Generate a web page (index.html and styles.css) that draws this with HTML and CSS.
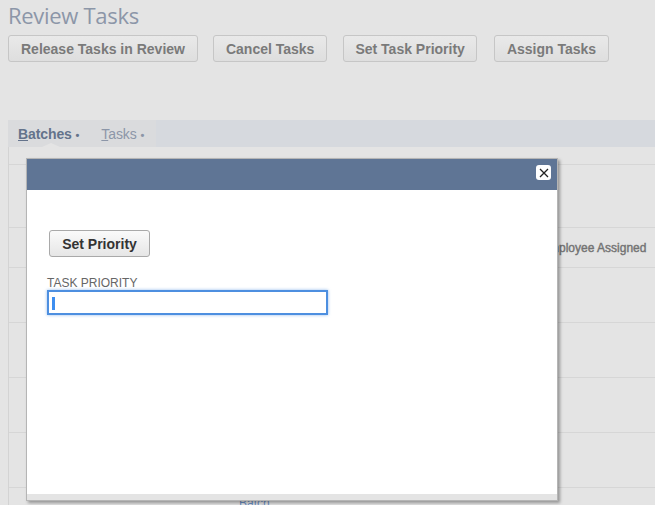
FILE: index.html
```html
<!DOCTYPE html>
<html>
<head>
<meta charset="utf-8">
<link rel="stylesheet" href="styles.css">
</head>
<body>
<div class="page">
  <h1 class="title">Review Tasks</h1>
  <div class="actions">
    <button class="btn">Release Tasks in Review</button>
    <button class="btn">Cancel Tasks</button>
    <button class="btn">Set Task Priority</button>
    <button class="btn">Assign Tasks</button>
  </div>
  <div class="tabs">
    <div class="tab-group">
      <span class="tab active"><u>B</u>atches <span class="dot">•</span></span>
      <span class="tab"><u>T</u>asks <span class="dot">•</span></span>
    </div>
  </div>
  <div class="panel">
    <div class="row r-top"></div>
    <div class="row r-filter"></div>
    <div class="row r-head"><span class="col-emp">Employee Assigned</span></div>
    <div class="row"></div>
    <div class="row"></div>
    <div class="row"></div>
    <div class="row"></div>
    <div class="row r-last"><span class="batch">Batch</span></div>
  </div>
</div>

<div class="dialog">
  <div class="dialog-head">
    <button class="close" aria-label="Close">
      <svg width="10" height="10" viewBox="0 0 10 10"><path d="M1 1L9 9M9 1L1 9" stroke="#222" stroke-width="1.3"/></svg>
    </button>
  </div>
  <div class="dialog-body">
    <button class="btn-primary">Set Priority</button>
    <label class="field-label">TASK PRIORITY</label>
    <div class="input"><span class="caret"></span></div>
  </div>
  <div class="dialog-foot"></div>
</div>
</body>
</html>
```
FILE: styles.css
```css
html, body {
  margin: 0;
  padding: 0;
  background: #e4e4e4;
  font-family: "Liberation Sans", Arial, sans-serif;
  overflow: hidden;
  height: 505px;
}
.page {
  padding: 0 0 0 8px;
}
.title {
  margin: 0;
  padding-top: 0;
  font-family: "Open Sans", sans-serif;
  font-weight: 400;
  font-size: 22px;
  line-height: 30px;
  color: #8c96a8;
  letter-spacing: -0.3px;
}
.actions {
  display: flex;
  gap: 15px;
  margin-top: 5px;
}
.actions .btn:nth-child(3) { margin-left: 1px; padding: 0 11px; }
.actions .btn:nth-child(4) { margin-left: 2px; }
.btn {
  height: 27px;
  padding: 0 12px;
  border: 1px solid #c6c6c6;
  border-radius: 3px;
  background: linear-gradient(#e9e9e9, #dedede);
  font-family: "Liberation Sans", Arial, sans-serif;
  font-weight: 700;
  font-size: 14px;
  color: #7a7a7a;
}
.tabs {
  margin-top: 58px;
  height: 27px;
  background: #d6d9de;
  display: flex;
}
.tab-group {
  width: 148px;
  background: #dadbdd;
  display: flex;
  align-items: center;
  padding-left: 10px;
  gap: 22px;
  box-sizing: border-box;
  position: relative;
}
.tab-group::after {
  content: "";
  position: absolute;
  left: 34px;
  bottom: 0;
  border-left: 9px solid transparent;
  border-right: 9px solid transparent;
  border-bottom: 4px solid #e4e4e4;
}
.tab {
  font-size: 14px;
  color: #8c96a8;
  letter-spacing: -0.1px;
}
.tab.active {
  font-weight: 700;
  color: #64738b;
}
.dot { font-size: 11px; font-weight: 700; }
.panel {
  border-left: 1px solid #d3d3d3;
  height: 358px;
}
.row {
  box-sizing: border-box;
  height: 55px;
  border-bottom: 1px solid #d6d6d6;
  position: relative;
}
.r-top { height: 18px; }
.r-filter { height: 63px; }
.r-head { height: 40px; }
.r-last { border-bottom: none; height: 18px; overflow: hidden; }
.col-emp {
  position: absolute;
  left: 532px;
  top: 13px;
  font-size: 12px;
  font-weight: 400;
  color: #737373;
  -webkit-text-stroke: 0.4px #737373;
}
.batch {
  position: absolute;
  left: 230px;
  top: 8px;
  font-size: 12px;
  line-height: 14px;
  color: #6b8fc4;
}
.dialog {
  position: absolute;
  left: 26px;
  top: 158px;
  width: 532px;
  height: 343px;
  background: #fff;
  border: 1px solid #b5b5b5;
  box-shadow: 2px 2px 3px rgba(0,0,0,0.35);
  display: flex;
  flex-direction: column;
  box-sizing: border-box;
}
.dialog-head {
  height: 31px;
  background: #5f7595;
  position: relative;
  flex: none;
}
.close {
  position: absolute;
  right: 6px;
  top: 6px;
  width: 15px;
  height: 15px;
  padding: 0;
  border: none;
  border-radius: 3px;
  background: #fff;
  display: flex;
  align-items: center;
  justify-content: center;
}
.dialog-body {
  flex: 1;
  padding: 40px 0 0 22px;
  display: flex;
  flex-direction: column;
  align-items: flex-start;
}
.btn-primary {
  width: 101px;
  height: 27px;
  border: 1px solid #a9a9a9;
  border-radius: 3px;
  background: linear-gradient(#fafafa, #e6e6e6);
  font-family: "Liberation Sans", Arial, sans-serif;
  font-weight: 700;
  font-size: 14px;
  color: #333;
  padding: 0;
}
.field-label {
  margin-top: 20px;
  margin-left: -2px;
  font-size: 12px;
  line-height: 13px;
  color: #666;
}
.input {
  margin-left: -2px;
  width: 281px;
  height: 25px;
  box-sizing: border-box;
  border: 2px solid #4d8fe0;
  box-shadow: 0 0 3px rgba(77,143,224,0.6);
  background: #fff;
  padding: 5px 0 0 3px;
}
.caret {
  display: block;
  width: 3px;
  height: 13px;
  background: #3d8ef0;
}
.dialog-foot {
  height: 6px;
  background: #e4e4e4;
  flex: none;
}
```
